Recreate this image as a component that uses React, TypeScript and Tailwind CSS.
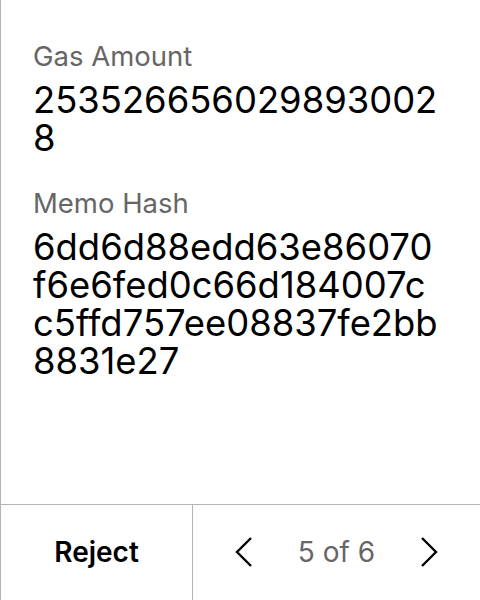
import React from 'react';

const fields = [
  { label: 'Gas Amount', lines: ['253526656029893002', '8'] },
  {
    label: 'Memo Hash',
    lines: ['6dd6d88edd63e86070', 'f6e6fed0c66d184007c', 'c5ffd757ee08837fe2bb', '8831e27'],
  },
];

function Chevron({ dir }: { dir: 'left' | 'right' }) {
  return (
    <svg width="18" height="32" viewBox="0 0 18 32" fill="none" stroke="#000" strokeWidth="2.4">
      {dir === 'left' ? <path d="M16 2 L2 16 L16 30" /> : <path d="M2 2 L16 16 L2 30" />}
    </svg>
  );
}

export default function App() {
  return (
    <div className="flex h-[600px] w-[480px] flex-col border-l border-[#b3b3b3] bg-white font-['Inter',sans-serif]">
      <div className="flex flex-1 flex-col gap-[30px] pl-[32px] pr-[24px] pt-[40px]">
        {fields.map((f) => (
          <div key={f.label} className="flex flex-col gap-[9px]">
            <div className="text-[27.5px] leading-[32px] text-[#666666]">{f.label}</div>
            <div className="text-[36.4px] leading-[38px] text-black">
              {f.lines.map((l) => (
                <div key={l}>{l}</div>
              ))}
            </div>
          </div>
        ))}
      </div>
      <div className="flex h-[96px] border-t border-[#b3b3b3]">
        <div className="flex w-[192px] items-center justify-center border-r border-[#b3b3b3] pb-[2px] text-[28px] font-semibold text-black">
          Reject
        </div>
        <div className="flex flex-1 items-center justify-between px-[42px] pb-[2px]">
          <Chevron dir="left" />
          <span className="text-[28px] text-[#666666]">5 of 6</span>
          <Chevron dir="right" />
        </div>
      </div>
    </div>
  );
}
